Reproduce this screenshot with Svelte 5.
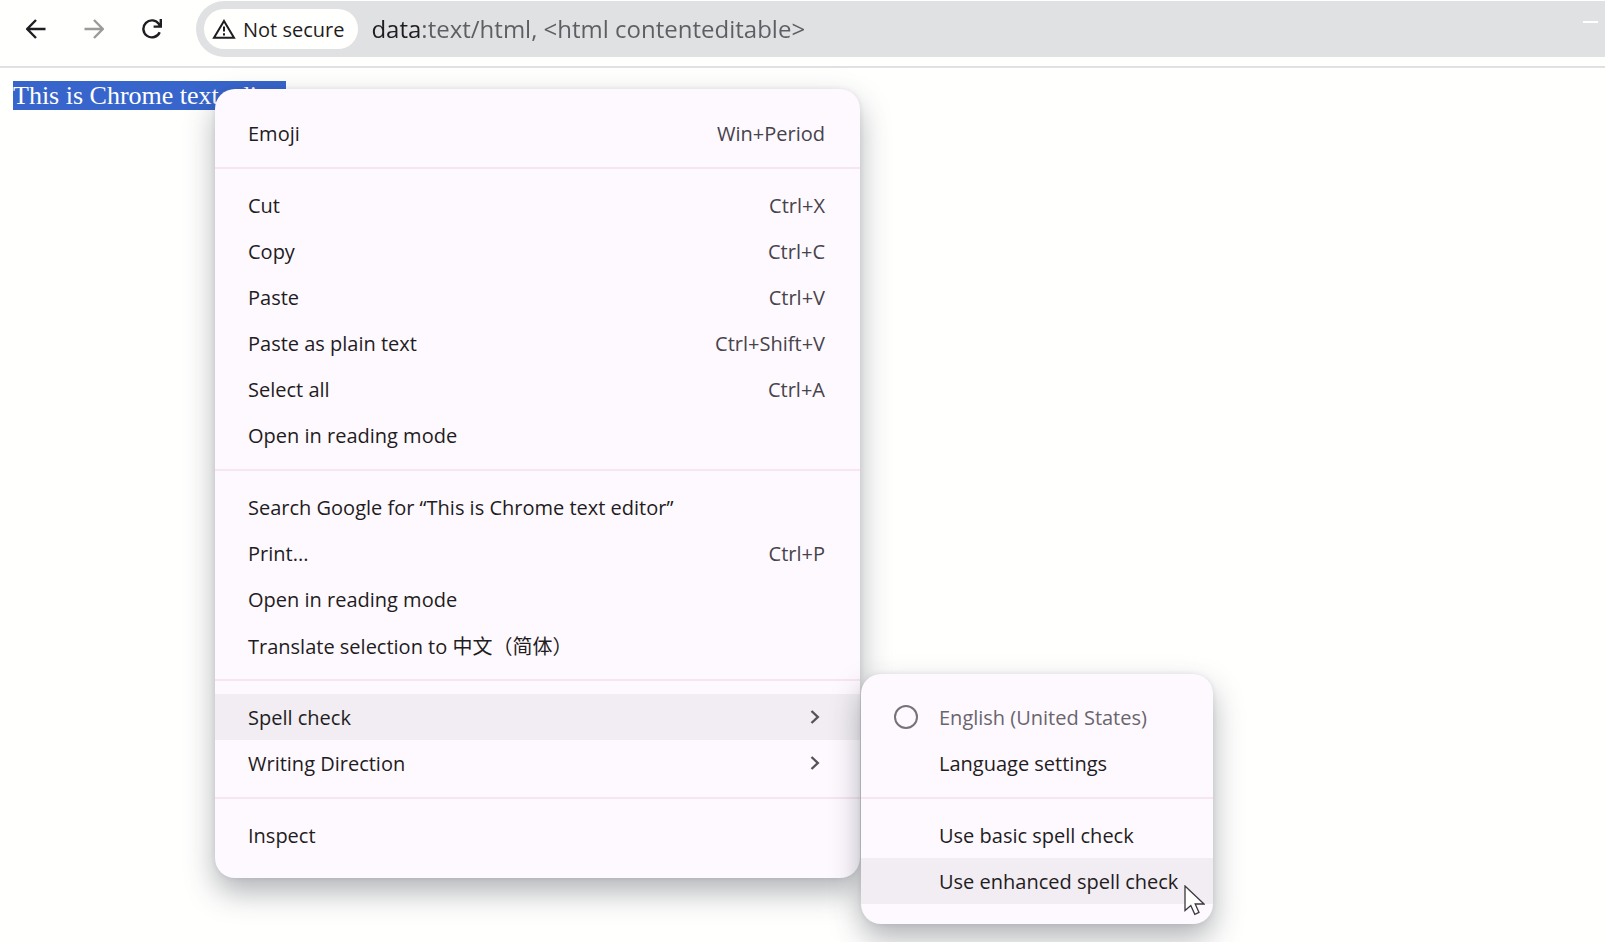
<script lang="ts">
	type Item = { label: string; keys?: string; sub?: boolean };

	const groups: Item[][] = [
		[{ label: 'Emoji', keys: 'Win+Period' }],
		[
			{ label: 'Cut', keys: 'Ctrl+X' },
			{ label: 'Copy', keys: 'Ctrl+C' },
			{ label: 'Paste', keys: 'Ctrl+V' },
			{ label: 'Paste as plain text', keys: 'Ctrl+Shift+V' },
			{ label: 'Select all', keys: 'Ctrl+A' },
			{ label: 'Open in reading mode' }
		],
		[
			{ label: 'Search Google for “This is Chrome text editor”' },
			{ label: 'Print...', keys: 'Ctrl+P' },
			{ label: 'Open in reading mode' },
			{ label: 'Translate selection to 中文（简体）' }
		],
		[
			{ label: 'Spell check', sub: true },
			{ label: 'Writing Direction', sub: true }
		],
		[{ label: 'Inspect' }]
	];

	let openItem = $state('Spell check');
	let spellMode = $state('Use enhanced spell check');
	let address = $state('data:text/html, <html contenteditable>');
</script>

<div class="browser">
	<header class="toolbar">
		<nav>
			<button aria-label="Back">
				<svg width="20" height="20" viewBox="0 0 20 20">
					<path d="M19.5 10H1.5M10 1L1.2 10L10 19" />
				</svg>
			</button>
			<button class="off" aria-label="Forward" disabled>
				<svg width="20" height="20" viewBox="0 0 20 20">
					<path d="M.5 10H18.5M10 1L18.8 10L10 19" />
				</svg>
			</button>
			<button aria-label="Reload">
				<svg width="20" height="20" viewBox="0 0 20 20">
					<path d="M17.7 13.2A8.5 8.5 0 1 1 17 5.2L18.6 7.2M18.8 0V7.6H11.6" />
				</svg>
			</button>
		</nav>
		<div class="omnibox">
			<button class="chip">
				<svg width="24" height="20" viewBox="0 0 24 20">
					<path d="M12 2L22 18.8H2Z" />
					<path d="M12 7.5V12.5M12 14.2V16.4" />
				</svg>
				Not secure
			</button>
			<input type="text" aria-label="Address" spellcheck="false" bind:value={address} />
			<span class="minimize"></span>
		</div>
	</header>

	<main contenteditable="true"><span class="selected">This is Chrome text editor</span></main>

	<div class="menu context" role="menu">
		{#each groups as group}
			<div class="group" role="group">
				{#each group as item}
					<button
						class="row"
						class:active={item.label === openItem}
						role="menuitem"
						onclick={() => item.sub && (openItem = item.label)}
					>
						<span>{item.label}</span>
						{#if item.keys}
							<kbd>{item.keys}</kbd>
						{/if}
						{#if item.sub}
							<svg class="chevron" width="10" height="14" viewBox="0 0 10 14">
								<path d="M1.5 1L7.8 7L1.5 13" />
							</svg>
						{/if}
					</button>
				{/each}
			</div>
		{/each}
	</div>

	{#if openItem === 'Spell check'}
		<div class="menu submenu" role="menu">
			<div class="group" role="group">
				<label class="row muted">
					<input type="radio" name="language" disabled />
					English (United States)
				</label>
				<button class="row" role="menuitem">Language settings</button>
			</div>
			<div class="group" role="group">
				{#each ['Use basic spell check', 'Use enhanced spell check'] as mode}
					<button
						class="row"
						class:active={mode === spellMode}
						role="menuitem"
						onclick={() => (spellMode = mode)}>{mode}</button
					>
				{/each}
			</div>
		</div>
	{/if}

	<svg class="pointer" width="21" height="31" viewBox="0 0 21 31">
		<path d="M1 1V25.5L6.8 20.5L10.8 29.3L15 27.4L11.2 19H20Z" />
	</svg>
</div>

<style>
	:global(body) {
		margin: 0;
		background: #fffffe;
	}
	.browser {
		position: relative;
		min-height: 100vh;
		overflow: hidden;
		font-family: 'Open Sans', 'Noto Sans CJK SC', sans-serif;
		color: #1f1c22;
	}
	button,
	input {
		font: inherit;
		color: inherit;
		border: 0;
		background: none;
		padding: 0;
		margin: 0;
	}
	svg {
		fill: none;
		stroke: currentColor;
		flex: none;
	}

	.toolbar {
		display: flex;
		padding: 1px 0 9px;
		border-bottom: 2px solid #e1e1e4;
	}
	nav {
		display: flex;
		align-items: center;
		gap: 38px;
		padding: 0 34px 0 26px;
	}
	nav button {
		display: flex;
		width: 20px;
		stroke-width: 2.4;
	}
	nav .off {
		color: #9b9b9b;
	}
	.omnibox {
		flex: 1;
		display: flex;
		align-items: center;
		gap: 13px;
		height: 56px;
		padding: 0 7px 0 8px;
		box-sizing: border-box;
		border-radius: 28px 0 0 28px;
		background: #dfe1e3;
	}
	.chip {
		display: flex;
		align-items: center;
		gap: 7px;
		height: 40px;
		padding: 0 14px 0 8px;
		border-radius: 20px;
		background: #fffffe;
		font-size: 20px;
		white-space: nowrap;
	}
	.chip svg {
		stroke-width: 2;
	}
	/* the scheme is darker than the rest of the address */
	.omnibox input {
		flex: 1;
		min-width: 0;
		height: 40px;
		font-size: 24px;
		line-height: 32px;
		padding-bottom: 2px;
		box-sizing: border-box;
		color: transparent;
		background: linear-gradient(90deg, #1f1c22 51px, #5c5e62 51px);
		background-clip: text;
		-webkit-background-clip: text;
		caret-color: #1f1c22;
		outline: none;
	}
	.minimize {
		width: 15px;
		height: 2px;
		margin-bottom: 15px;
		background: #fffffe;
	}

	main {
		padding: 13px;
		font: 26px/30px 'Liberation Serif', serif;
		outline: none;
	}
	.selected {
		background: #3765cb;
		color: #fffffe;
	}

	.menu {
		position: absolute;
		box-sizing: border-box;
		padding: 20px 0;
		border-radius: 20px;
		background: #fef9ff;
		box-shadow:
			0 14px 30px rgba(50, 55, 65, 0.38),
			0 0 5px rgba(50, 55, 65, 0.1);
		font-size: 20px;
	}
	.context {
		top: 89px;
		left: 215px;
		width: 645px;
		padding-top: 21px;
	}
	.submenu {
		top: 674px;
		left: 861px;
		width: 352px;
	}
	.group + .group {
		margin-top: 11px;
		padding-top: 13px;
		border-top: 2px solid #f5e6f1;
	}
	.row {
		display: flex;
		align-items: center;
		justify-content: space-between;
		box-sizing: border-box;
		width: 100%;
		height: 46px;
		padding: 0 35px 0 33px;
		text-align: left;
		white-space: nowrap;
	}
	.submenu .row {
		justify-content: flex-start;
		padding: 0 0 0 78px;
	}
	.submenu .muted {
		gap: 21px;
		padding-left: 33px;
		color: #69656d;
	}
	.active {
		background: #f1edf2;
	}
	kbd {
		font: inherit;
		color: #47434b;
	}
	.chevron {
		margin-right: 5px;
		stroke: #57525a;
		stroke-width: 2.4;
	}
	input[type='radio'] {
		appearance: none;
		width: 24px;
		height: 24px;
		box-sizing: border-box;
		border: 2px solid #77717a;
		border-radius: 50%;
	}
	.pointer {
		position: absolute;
		top: 885px;
		left: 1184px;
	}
	.pointer path {
		fill: #fffffe;
		stroke: #3b383f;
		stroke-width: 1.3;
	}
</style>
